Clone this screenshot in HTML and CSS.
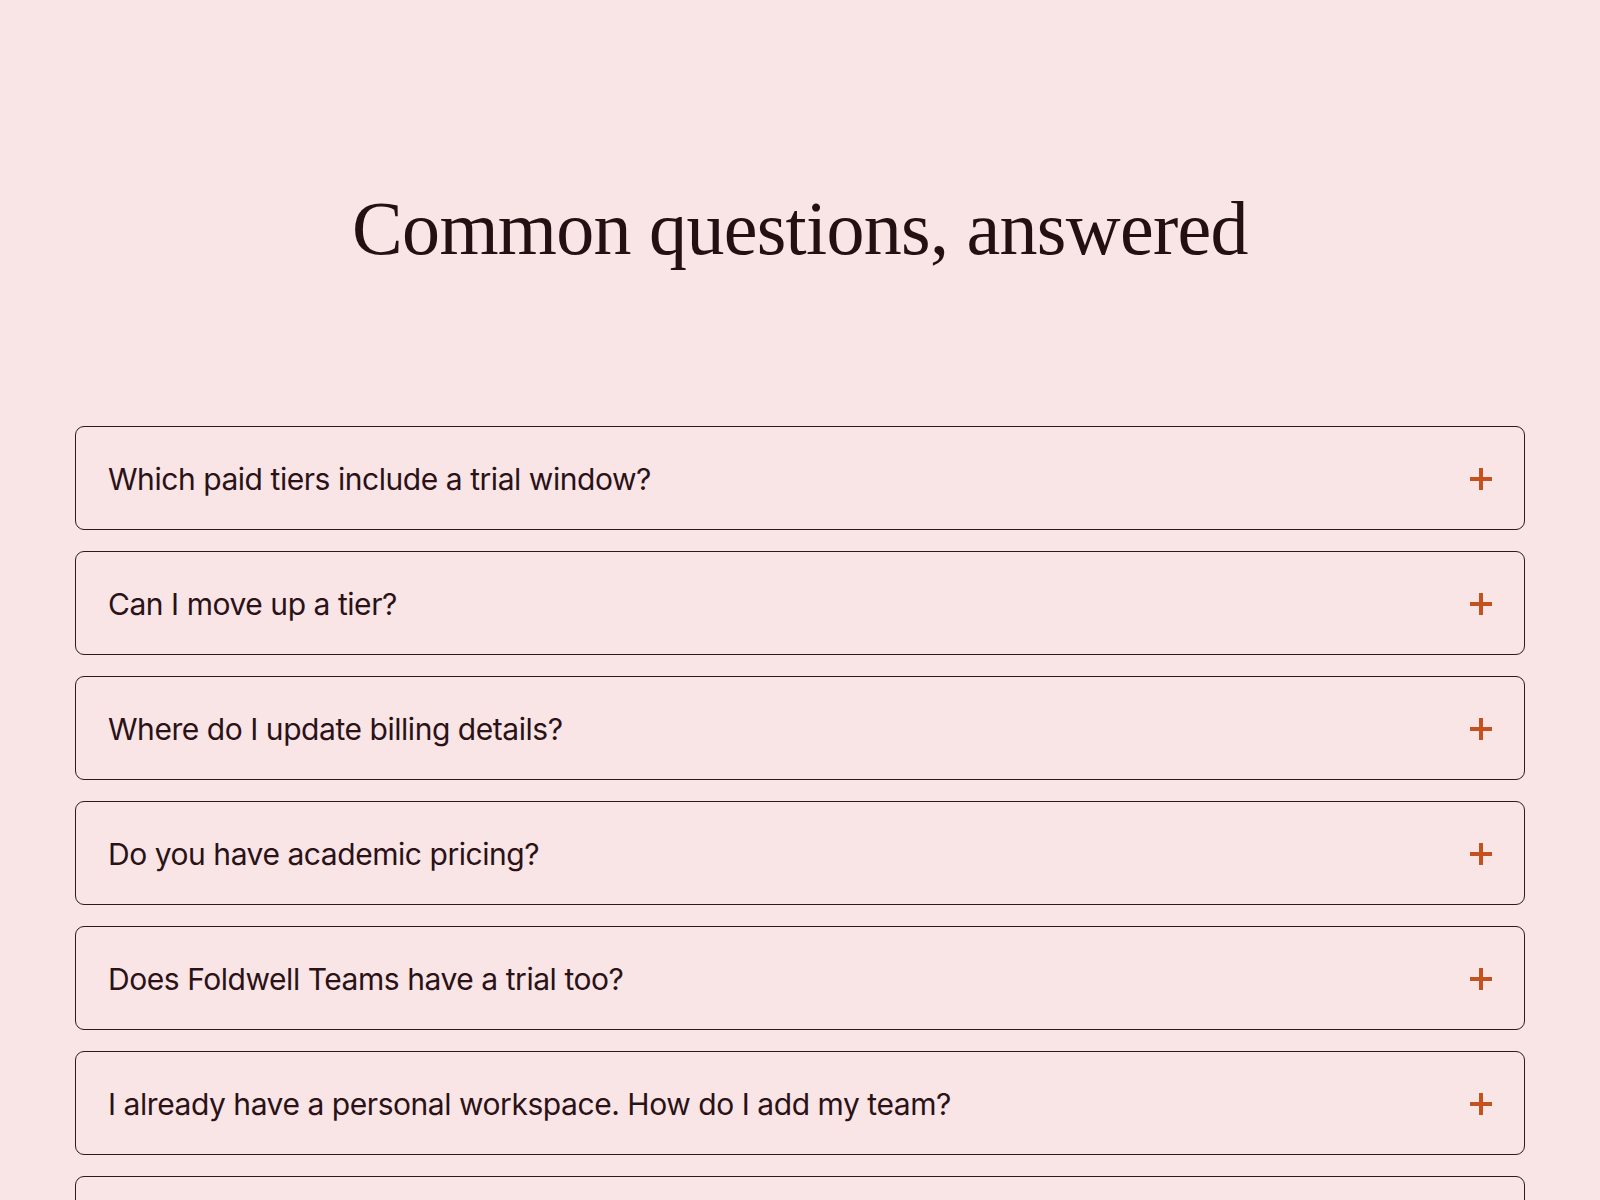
FILE: index.html
```html
<!DOCTYPE html>
<html lang="en">
<head>
<meta charset="utf-8">
<title>FAQ</title>
<link rel="stylesheet" href="styles.css">
</head>
<body>
<main class="faq">
  <h1 class="faq-title">Common questions, answered</h1>
  <ul class="faq-list">
    <li class="faq-item"><button class="faq-q"><span>Which paid tiers include a trial window?</span><span class="plus"></span></button></li>
    <li class="faq-item"><button class="faq-q"><span>Can I move up a tier?</span><span class="plus"></span></button></li>
    <li class="faq-item"><button class="faq-q"><span>Where do I update billing details?</span><span class="plus"></span></button></li>
    <li class="faq-item"><button class="faq-q"><span>Do you have academic pricing?</span><span class="plus"></span></button></li>
    <li class="faq-item"><button class="faq-q"><span>Does Foldwell Teams have a trial too?</span><span class="plus"></span></button></li>
    <li class="faq-item"><button class="faq-q"><span>I already have a personal workspace. How do I add my team?</span><span class="plus"></span></button></li>
    <li class="faq-item"><button class="faq-q"><span>Can I cancel at any time?</span><span class="plus"></span></button></li>
  </ul>
</main>
</body>
</html>
```

FILE: styles.css
```css
* { box-sizing: border-box; }

html, body {
  margin: 0;
  background: #f9e4e6;
  color: #2a1216;
}

.faq {
  padding: 0 75px 80px;
}

.faq-title {
  margin: 0;
  padding-top: 184px;
  text-align: center;
  font-family: "Liberation Serif", "Times New Roman", serif;
  font-weight: 400;
  font-size: 76px;
  line-height: 88px;
  letter-spacing: -0.7px;
  color: #221013;
}

.faq-list {
  list-style: none;
  margin: 154px 0 0;
  padding: 0;
  display: flex;
  flex-direction: column;
  gap: 21px;
}

.faq-q {
  width: 100%;
  height: 104px;
  display: flex;
  align-items: center;
  justify-content: space-between;
  padding: 2px 32px 0;
  background: transparent;
  border: 1.5px solid #2e1a1d;
  border-radius: 9px;
  font-family: Inter, "Liberation Sans", sans-serif;
  font-size: 30px;
  letter-spacing: -0.45px;
  color: #2a1216;
  text-align: left;
  cursor: pointer;
}

.plus {
  position: relative;
  width: 22px;
  height: 22px;
  flex: none;
}
.plus::before,
.plus::after {
  content: "";
  position: absolute;
  background: #c4521f;
}
.plus::before { left: 0; right: 0; top: 9px; height: 4px; }
.plus::after { top: 0; bottom: 0; left: 9px; width: 4px; }
```
